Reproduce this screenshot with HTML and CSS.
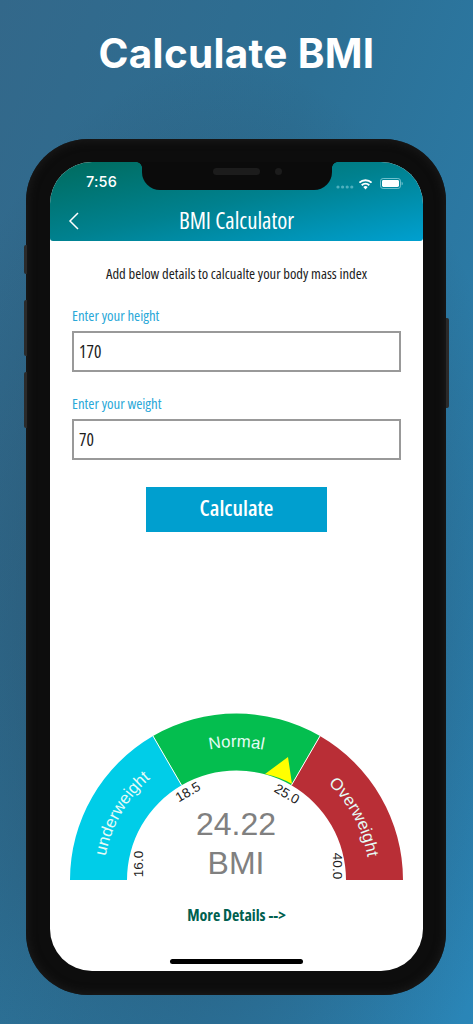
FILE: index.html
```html
<!DOCTYPE html>
<html lang="en">
<head>
<meta charset="utf-8">
<title>Calculate BMI</title>
<link rel="stylesheet" href="styles.css">
</head>
<body>
<h1 class="headline">Calculate BMI</h1>
<div class="phone">
  <span class="side side-mute"></span>
  <span class="side side-up"></span>
  <span class="side side-down"></span>
  <span class="side side-power"></span>
  <div class="notch"><span class="speaker"></span><span class="camera"></span></div>
  <div class="screen">
    <header class="app-header">
      <div class="status">
        <span class="time">7:56</span>
        <div class="status-icons">
          <svg class="signal" width="18" height="4" viewBox="0 0 18 4"><g fill="#4fb0bd"><circle cx="2" cy="2" r="1.6"/><circle cx="6.6" cy="2" r="1.6"/><circle cx="11.2" cy="2" r="1.6"/><circle cx="15.8" cy="2" r="1.6"/></g></svg>
          <svg class="wifi" width="15" height="12" viewBox="0 0 15 12"><path d="M7.5 11.6 5.3 9.1a3.2 3.2 0 0 1 4.4 0Z" fill="#fff"/><path d="M3.7 7.2a5.6 5.6 0 0 1 7.6 0M1.4 4.6a9 9 0 0 1 12.2 0" fill="none" stroke="#fff" stroke-width="1.9"/></svg>
          <svg class="battery" width="23" height="11" viewBox="0 0 23 11"><rect x=".5" y=".5" width="20" height="10" rx="2.6" fill="none" stroke="#6fc0cc"/><rect x="2" y="2" width="17" height="7" rx="1.4" fill="#fff"/><path d="M21.6 3.7c.8.2 1.2.9 1.2 1.8s-.4 1.6-1.2 1.8Z" fill="#6fc0cc"/></svg>
        </div>
      </div>
      <div class="nav">
        <svg class="back" width="11" height="18" viewBox="0 0 11 18"><path d="M10 1 2 9l8 8" fill="none" stroke="#fff" stroke-width="1.5"/></svg>
        <span class="nav-title">BMI Calculator</span>
      </div>
    </header>
    <main class="content">
      <p class="intro">Add below details to calcualte your body mass index</p>
      <div class="field field-height">
        <div class="field-label">Enter your height</div>
        <div class="field-box">170</div>
      </div>
      <div class="field field-weight">
        <div class="field-label">Enter your weight</div>
        <div class="field-box">70</div>
      </div>
      <button class="calc" type="button">Calculate</button>
      <svg class="gauge" width="373" height="170" viewBox="0 0 373 170">
        <defs>
          <path id="labelArc" d="M53.5 170A133 133 0 0 1 319.5 170"/>
        </defs>
        <path d="M20 170A166.5 166.5 0 0 1 103 26L131.6 75.3A109.5 109.5 0 0 0 77 170Z" fill="#00cde8"/>
        <path d="M103 26A166.5 166.5 0 0 1 270 26L241.4 75.3A109.5 109.5 0 0 0 131.6 75.3Z" fill="#04be4f"/>
        <path d="M270 26A166.5 166.5 0 0 1 353 170L296 170A109.5 109.5 0 0 0 241.4 75.3Z" fill="#b92e36"/>
        <path d="M103 26 131.6 75.3M270 26 241.4 75.3" stroke="#fff" stroke-width="1" fill="none"/>
        <path d="M215 64 238 47 242 74Q230 67 215 64Z" fill="#ffff00"/>
        <text class="zone"><textPath href="#labelArc" startOffset="16.7%">underweight</textPath></text>
        <text class="zone"><textPath href="#labelArc" startOffset="50%">Normal</textPath></text>
        <text class="zone"><textPath href="#labelArc" startOffset="84.4%">Overweight</textPath></text>
        <text class="tick" transform="translate(88 154) rotate(-90)" y="4.5">16.0</text>
        <text class="tick" transform="translate(138 82) rotate(-30)" y="4.5">18.5</text>
        <text class="tick" transform="translate(237 84) rotate(30)" y="4.5">25.0</text>
        <text class="tick" transform="translate(287 156) rotate(90)" y="4.5">40.0</text>
        <text class="reading" x="186" y="125">24.22</text>
        <text class="reading" x="186" y="163.5">BMI</text>
      </svg>
      <a class="more" href="#">More Details --&gt;</a>
    </main>
    <div class="home-bar"></div>
  </div>
</div>
</body>
</html>
```
FILE: styles.css
```css
* { box-sizing: border-box; }
html, body { margin: 0; height: 100%; }
body {
  width: 473px;
  height: 1024px;
  overflow: hidden;
  display: flex;
  flex-direction: column;
  background:
    radial-gradient(ellipse 320px 580px at 220px 640px, rgba(38,55,72,.6), rgba(38,55,72,0) 100%),
    linear-gradient(110deg, #33688a 0%, #2c6f94 40%, #2a86b8 100%);
  font-family: "Open Sans", "Liberation Sans", sans-serif;
  font-stretch: 75%;
}
.headline {
  margin: 30px 0 0;
  height: 109px;
  font: 700 40.5px/48px Inter, "Liberation Sans", sans-serif;
  letter-spacing: .3px;
  color: #fff;
  text-align: center;
}
.phone {
  position: relative;
  flex: none;
  width: 420px;
  height: 856px;
  margin-left: 26px;
  padding: 23px 23px 24px 24px;
  border-radius: 62px;
  background: #0d0d0d;
  box-shadow: inset 0 0 8px 2px #1a1a1a;
}
.side { position: absolute; width: 3px; background: #2a2a2a; border-radius: 2px 0 0 2px; left: -2px; }
.side-mute { top: 106px; height: 29px; }
.side-up { top: 161px; height: 56px; }
.side-down { top: 233px; height: 56px; }
.side-power { left: auto; right: -3px; top: 179px; height: 90px; border-radius: 0 2px 2px 0; }
.notch {
  position: absolute;
  z-index: 2;
  top: 23px;
  left: 116px;
  width: 190px;
  height: 28px;
  background: #0b0b0b;
  border-radius: 0 0 18px 18px;
  display: flex;
  justify-content: flex-start;
  align-items: flex-start;
}
.notch::before,
.notch::after {
  content: "";
  position: absolute;
  top: 0;
  width: 6px;
  height: 6px;
}
.notch::before { left: -6px; background: radial-gradient(circle at 0 100%, transparent 5.6px, #0b0b0b 6.2px); }
.notch::after { right: -6px; background: radial-gradient(circle at 100% 100%, transparent 5.6px, #0b0b0b 6.2px); }
.speaker { width: 47px; height: 7px; margin: 6px 0 0 71px; border-radius: 4px; background: #1c1c1c; }
.camera { width: 7px; height: 7px; margin: 6px 0 0 15px; border-radius: 50%; background: #1c1c1c; }
.screen {
  position: relative;
  height: 809px;
  background: #fff;
  border-radius: 42px;
  overflow: hidden;
}
.app-header {
  height: 79px;
  background: linear-gradient(to bottom right, #006b5d 0%, #00818f 50%, #00a0d0 100%);
  border-radius: 0 0 3px 3px;
  color: #fff;
}
.status {
  display: flex;
  justify-content: space-between;
  align-items: center;
  height: 40px;
  padding: 0 20px 0 36px;
}
.time { font: 500 14.5px/1 Inter, "Liberation Sans", sans-serif; letter-spacing: .2px; margin-top: 1px; font-stretch: normal; }
.status-icons { display: flex; align-items: center; gap: 4px; margin-top: 3px; }
.signal { margin-top: 6px; }
.battery { margin-left: 3px; }
.nav {
  position: relative;
  height: 39px;
  display: flex;
  align-items: center;
  justify-content: center;
  margin-top: -1px;
}
.back { position: absolute; left: 18px; top: 11px; }
.nav-title { font-size: 22.8px; line-height: 36px; }
.content { display: flex; flex-direction: column; }
.intro {
  margin: 22px 0 0;
  font-size: 14.6px;
  line-height: 20px;
  text-align: center;
  color: #1c1c1c;
}
.field { margin: 0 22px 0 22px; }
.field-height { margin-top: 22px; }
.field-weight { margin-top: 21px; }
.field-label { font-size: 14.8px; line-height: 20px; color: #2aa8d8; margin-bottom: 6px; }
.field-box {
  height: 41px;
  border: 2px solid #999;
  padding: 0 5px;
  font-size: 17.5px;
  line-height: 37px;
  color: #1c1c1c;
}
.calc {
  align-self: center;
  width: 181px;
  height: 45px;
  margin-top: 27px;
  padding: 0 0 5px;
  border: 0;
  background: #009fcf;
  color: #fff;
  font: 600 22px/40px "Open Sans", "Liberation Sans", sans-serif;
  font-stretch: 75%;
}
.gauge { display: block; margin-top: 178px; flex: none; }
.zone { font: 400 16.8px "Liberation Sans", sans-serif; fill: #e6fbf6; text-anchor: middle; font-stretch: normal; }
.tick { font: 400 13.5px "Liberation Sans", sans-serif; fill: #222; text-anchor: middle; font-stretch: normal; }
.reading { font: 400 32px "Liberation Sans", sans-serif; fill: #808080; text-anchor: middle; font-stretch: normal; }
.more {
  margin-top: 25px;
  text-align: center;
  font-size: 16px;
  font-weight: 700;
  line-height: 20px;
  color: #00604f;
  text-decoration: none;
}
.home-bar {
  position: absolute;
  left: 120px;
  bottom: 7px;
  width: 133px;
  height: 5px;
  border-radius: 3px;
  background: #000;
}
```
